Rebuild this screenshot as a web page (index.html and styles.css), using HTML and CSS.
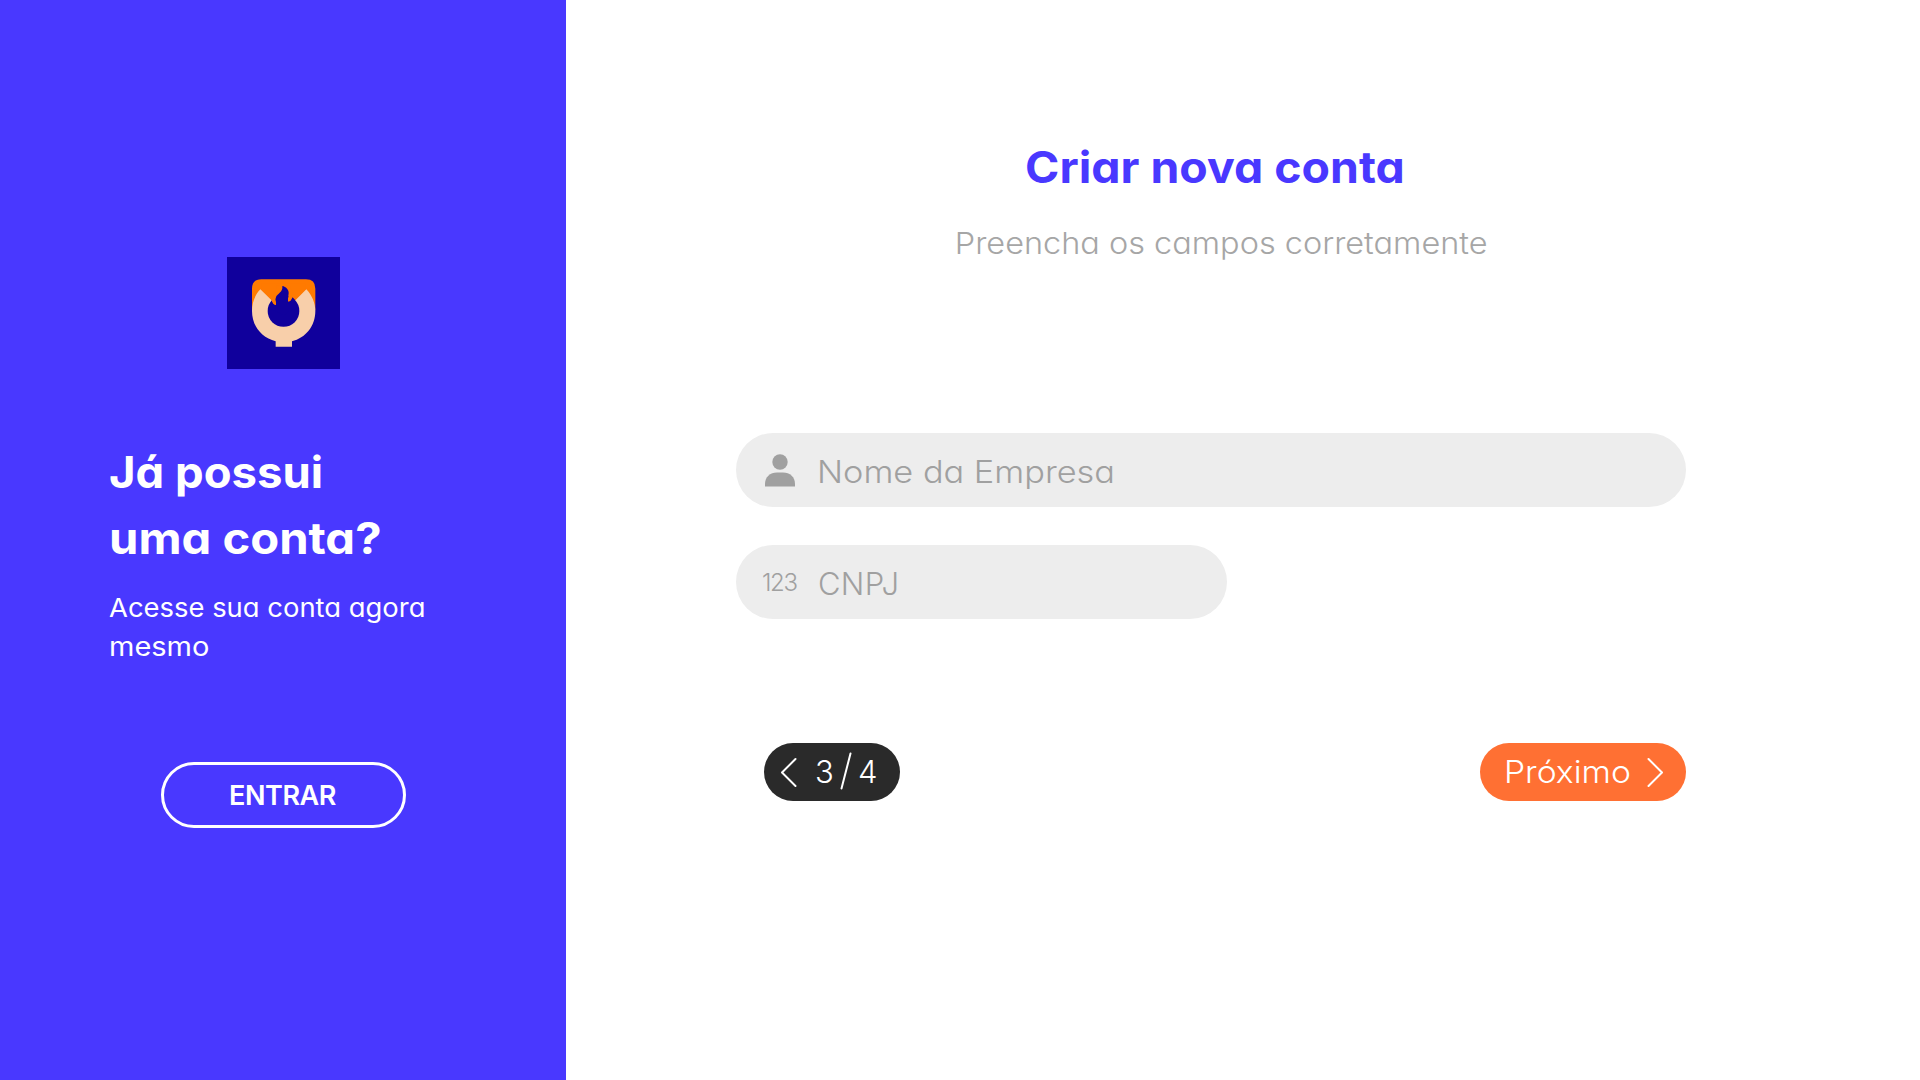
FILE: index.html
```html
<!DOCTYPE html>
<html lang="pt-BR">
<head>
<meta charset="utf-8">
<title>Criar nova conta</title>
<link rel="stylesheet" href="styles.css">
</head>
<body>
<main class="page">
  <aside class="sidebar">
    <svg class="logo" viewBox="0 0 339 336" preserveAspectRatio="none" aria-hidden="true">
      <rect width="339" height="336" fill="#10009c"/>
      <path fill="#ff7a00" d="M75 160V95Q75 67 103 67H237Q265 67 265 95V160L238 150H100Z"/>
      <path fill="#f8cfaa" d="M100 97L170 165L238 97C255 115 265 138 265 162C265 208 235 243 195 253V269H146V253C105 243 75 208 75 162C75 138 83 115 100 97Z"/>
      <path fill="#ff7a00" d="M103 97L137 132L170 150L204 128L235 97V80H103Z"/>
      <circle cx="169.500" cy="162" r="47.500" fill="#10009c"/>
      <path fill="#ff7a00" d="M134 129C135 138 139 145 147 144C149 140 147 134 146 128C146 111 166 108 166 87H178V108L186 110C184 118 181 130 183 135C191 135 194 129 196 121L208 125L188 86H150Z"/>
      <path fill="#10009c" d="M166 87C177 89 185 98 185 107C185 115 181 129 184 134C191 136 194 129 197 121L203 128L210 150L170 174L130 155L134 132C137 139 140 145 147 144C149 138 144 131 147 120C151 109 168 107 166 87Z"/>
    </svg>
    <h2 class="side-title"><span class="line line-a">Já possui</span><span class="line line-b">uma conta?</span></h2>
    <p class="side-text"><span class="line line-c">Acesse sua conta agora</span><span class="line line-d">mesmo</span></p>
    <button class="login">ENTRAR</button>
  </aside>
  <section class="content">
    <header class="heading">
      <h1 class="title">Criar nova conta</h1>
      <p class="subtitle">Preencha os campos corretamente</p>
    </header>
    <form class="form">
      <label class="field">
        <svg class="user" viewBox="0 0 30 33" aria-hidden="true"><circle cx="15" cy="8" r="7.700"/><path d="M0 32.500V30C0 23 5 18.500 12 18.500H18C25 18.500 30 23 30 30V32.500Z"/></svg>
        <span class="label label-name">Nome da Empresa</span>
      </label>
      <label class="field field-short">
        <span class="digits">123</span>
        <span class="label label-id">CNPJ</span>
      </label>
      <div class="actions">
        <button type="button" class="pill back">
          <svg class="chevron" viewBox="0 0 17 31" aria-hidden="true"><path d="M15.500 2L2 15.500L15.500 29"/></svg>
          <span class="step">3</span>
          <svg class="slash" viewBox="0 0 12 38" aria-hidden="true"><path d="M10.500 1.500L1.500 36.500"/></svg>
          <span class="step">4</span>
        </button>
        <button type="button" class="pill next">
          <span class="next-text">Próximo</span>
          <svg class="chevron" viewBox="0 0 17 31" aria-hidden="true"><path d="M1.500 2L15 15.500L1.500 29"/></svg>
        </button>
      </div>
    </form>
  </section>
</main>
</body>
</html>
```
FILE: styles.css
```css
* { box-sizing: border-box; margin: 0; padding: 0; }
body {
  font-family: Inter, "Open Sans", sans-serif;
  font-feature-settings: "cv11" 1;
  background: #fff;
  overflow: hidden;
}
button { font: inherit; font-feature-settings: inherit; border: 0; color: #fff; }
svg { display: block; flex: none; }
.page { display: flex; height: 1080px; }

.line { display: block; white-space: nowrap; transform-origin: left; }
.line-a { transform: scaleX(1.033); }
.line-b { transform: scaleX(1.073); }
.line-c { transform: scaleX(1.054); }
.line-d { transform: scaleX(1.115); }

.sidebar {
  flex: none;
  width: 566px;
  padding: 257px 109px 0;
  background: #4938ff;
  color: #fff;
  display: flex;
  flex-direction: column;
}
.logo { width: 113px; height: 112px; align-self: center; margin-left: 1px; }
.side-title { margin-top: 70px; font-size: 44px; line-height: 66px; font-weight: 750; }
.side-text { margin-top: 17px; font-size: 26px; line-height: 39px; }
.login {
  align-self: center;
  width: 245px;
  height: 66px;
  margin: 96px 0 0 1px;
  padding-right: 2px;
  border: 3px solid #fff;
  border-radius: 33px;
  background: transparent;
  font-size: 27px;
  font-weight: 600;
  letter-spacing: -0.45px;
}

.content { flex: 1; padding: 134px 234px 0 170px; }
.heading { display: flex; flex-direction: column; align-items: center; padding-left: 8px; height: 299px; }
.title {
  color: #4938ff;
  font-size: 44px;
  line-height: 66px;
  font-weight: 750;
  transform: scaleX(1.055);
}
.subtitle {
  margin: 21px 0 0 12px;
  color: #a6a6a6;
  font-size: 30px;
  line-height: 45px;
  font-weight: 270;
  transform: scaleX(1.082);
}
.field {
  display: flex;
  align-items: center;
  width: 950px;
  height: 74px;
  padding-left: 29px;
  border-radius: 37px;
  background: #ededed;
  color: #a0a0a0;
}
.field-short { width: 491px; margin-top: 38px; padding-left: 26px; }
.user { width: 30px; height: 33px; fill: #a0a0a0; }
.label { padding-top: 3px; font-size: 31px; font-weight: 280; }
.label-name { margin-left: 22px; transform: scaleX(1.107); transform-origin: left; }
.label-id { letter-spacing: 0.3px; }
.digits { width: 56px; font-size: 24px; font-weight: 300; letter-spacing: -1.4px; }
.actions { display: flex; justify-content: space-between; margin: 124px 0 0 28px; }
.pill {
  display: flex;
  align-items: center;
  height: 58px;
  border-radius: 29px;
  font-size: 31px;
  font-weight: 280;
}
.back { width: 136px; padding-left: 16px; background: #2a2a2a; }
.next { width: 206px; padding-left: 24px; background: #ff7033; }
.chevron { width: 17px; height: 31px; }
.chevron path, .slash path {
  fill: none;
  stroke: #fff;
  stroke-width: 2;
  stroke-linecap: round;
  stroke-linejoin: round;
}
.slash { width: 12px; height: 38px; margin: 0 6px 2px; }
.back .chevron { margin-right: 18px; }
.step { width: 19px; text-align: center; transform: translateY(-1px); }
.next-text { width: 143px; text-align: left; transform: translateY(-1px) scaleX(1.085); transform-origin: left; }
```
